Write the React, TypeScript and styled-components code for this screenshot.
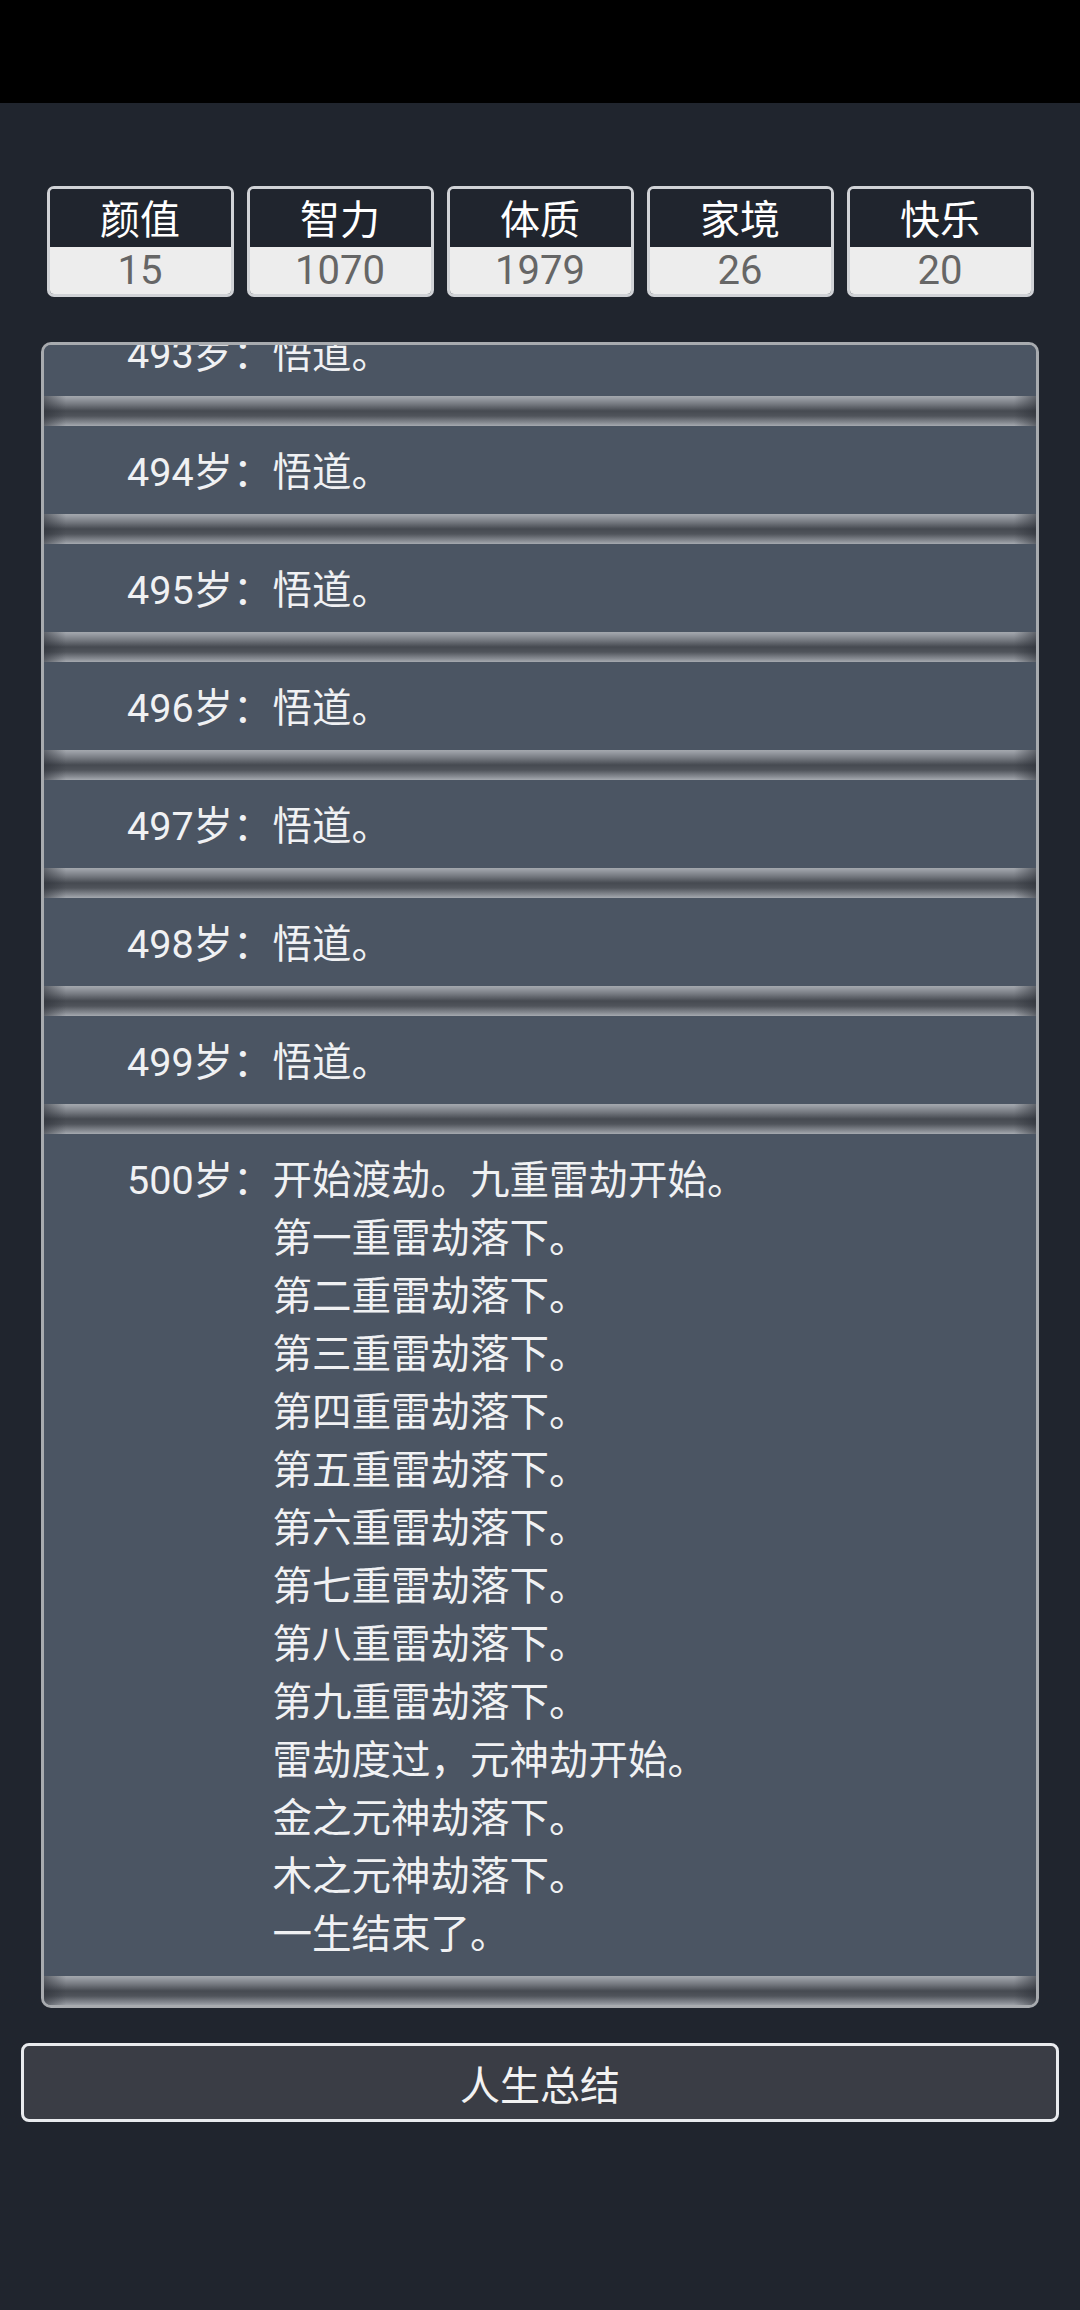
import React from 'react';
import styled, { createGlobalStyle } from 'styled-components';

const GlobalStyle = createGlobalStyle`
  html, body {
    margin: 0;
    padding: 0;
    background: #20252e;
  }
  body {
    font-family: Roboto, "Noto Sans CJK SC", "Noto Sans", sans-serif;
    color: #f2f2f2;
  }
`;

const Page = styled.div`
  width: 1080px;
  min-height: 2310px;
  background: #20252e;
`;

const StatusBar = styled.div`
  height: 103px;
  background: #000;
`;

const StatsRow = styled.div`
  display: grid;
  grid-template-columns: repeat(5, 187px);
  gap: 13px;
  justify-content: center;
  margin-top: 83px;
`;

const StatBox = styled.div`
  height: 111px;
  box-sizing: border-box;
  border: 3px solid #d0d2d6;
  border-radius: 7px;
  overflow: hidden;
  display: flex;
  flex-direction: column;
`;

const StatLabel = styled.div`
  height: 58px;
  background: #20252e;
  color: #fff;
  font-size: 40px;
  line-height: 64px;
  text-align: center;
`;

const StatValue = styled.div`
  flex: 1;
  background: #ededed;
  color: #666;
  font-size: 40px;
  line-height: 48px;
  text-align: center;
`;

const Panel = styled.div`
  width: 998px;
  height: 1666px;
  box-sizing: border-box;
  margin: 45px auto 0;
  border: 3px solid #a8abaf;
  border-radius: 10px;
  background: #4b5563;
  overflow: hidden;
`;

const List = styled.div`
  margin-top: -37px;
`;

const Row = styled.div`
  display: flex;
  padding: 18px 0 12px 83px;
  background: #4b5563;
  font-size: 39.5px;
  line-height: 58px;
  color: #f0f1f3;
`;

const Age = styled.span`
  flex: none;
  white-space: nowrap;
`;

const Lines = styled.div`
  display: flex;
  flex-direction: column;
`;

const Groove = styled.div`
  height: 30px;
  background:
    linear-gradient(to right, rgba(40, 44, 52, 0.55), rgba(40, 44, 52, 0) 22px,
      rgba(40, 44, 52, 0) calc(100% - 22px), rgba(40, 44, 52, 0.55)),
    linear-gradient(to bottom, #a4a8ae 0px, #9a9ea5 2px, #767a81 8px,
      #464a51 15px, #50545b 20px, #8a8e95 27px, #a6aab0 30px);
`;

const SummaryButton = styled.button`
  display: block;
  width: 1038px;
  height: 79px;
  margin: 35px auto 0;
  box-sizing: border-box;
  border: 3px solid #e9ebee;
  border-radius: 8px;
  background: #3a3d45;
  color: #f2f2f2;
  font-family: Roboto, "Noto Sans CJK SC", sans-serif;
  font-size: 40px;
  padding: 0;
`;

const stats = [
  { label: '颜值', value: 15 },
  { label: '智力', value: 1070 },
  { label: '体质', value: 1979 },
  { label: '家境', value: 26 },
  { label: '快乐', value: 20 },
];

const events: { age: number; lines: string[] }[] = [
  ...[493, 494, 495, 496, 497, 498, 499].map((age) => ({ age, lines: ['悟道。'] })),
  {
    age: 500,
    lines: [
      '开始渡劫。九重雷劫开始。',
      '第一重雷劫落下。',
      '第二重雷劫落下。',
      '第三重雷劫落下。',
      '第四重雷劫落下。',
      '第五重雷劫落下。',
      '第六重雷劫落下。',
      '第七重雷劫落下。',
      '第八重雷劫落下。',
      '第九重雷劫落下。',
      '雷劫度过，元神劫开始。',
      '金之元神劫落下。',
      '木之元神劫落下。',
      '一生结束了。',
    ],
  },
];

const App: React.FC = () => {
  return (
    <Page>
      <GlobalStyle />
      <StatusBar />
      <StatsRow>
        {stats.map((s) => (
          <StatBox key={s.label}>
            <StatLabel>{s.label}</StatLabel>
            <StatValue>{s.value}</StatValue>
          </StatBox>
        ))}
      </StatsRow>
      <Panel>
        <List>
          {events.map((e) => (
            <React.Fragment key={e.age}>
              <Row>
                <Age>{e.age}岁：</Age>
                <Lines>
                  {e.lines.map((l, i) => (
                    <span key={i}>{l}</span>
                  ))}
                </Lines>
              </Row>
              <Groove />
            </React.Fragment>
          ))}
        </List>
      </Panel>
      <SummaryButton>人生总结</SummaryButton>
    </Page>
  );
};

export default App;
